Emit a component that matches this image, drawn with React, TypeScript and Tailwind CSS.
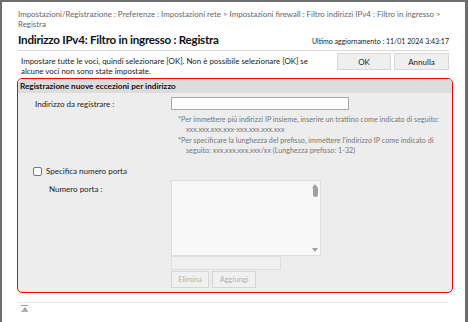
import React from 'react'

const font = { fontFamily: 'Lato, "Noto Sans", Arial, sans-serif' }

function ScrollList() {
  return (
    <div className="relative h-[76px] w-[150px] border border-[#dedede] bg-[#f8f8f8]">
      <div className="absolute right-[2px] top-[3px] flex h-[68px] w-[6px] flex-col items-center justify-between">
        <div className="h-0 w-0 border-x-[3px] border-b-[4px] border-x-transparent border-b-[#a0a0a0]" />
        <div className="-mt-[52px] h-[10px] w-[5px] rounded-full bg-[#a0a0a0]" />
        <div className="h-0 w-0 border-x-[3px] border-t-[4px] border-x-transparent border-t-[#a0a0a0]" />
      </div>
    </div>
  )
}

export default function App() {
  return (
    <div
      className="relative h-[322px] w-[468px] overflow-hidden border-l-2 border-r-[3px] border-t-2 border-[#6e6e6e] bg-white"
      style={font}
    >
      <div className="pl-4 pr-4 pt-[7px]">
        <div className="whitespace-nowrap text-[7.9px] leading-[10px] text-[#666]">
          Impostazioni/Registrazione : Preferenze : Impostazioni rete &gt; Impostazioni firewall : Filtro indirizzi IPv4 : Filtro in ingresso &gt;
          <br />
          Registra
        </div>

        <div className="mt-[1px] flex h-[21px] items-center justify-between border-b border-[#d6d6d6]">
          <h1 className="whitespace-nowrap text-[11.6px] font-bold leading-none tracking-[-0.25px] text-[#111]">
            Indirizzo IPv4: Filtro in ingresso : Registra
          </h1>
          <span className="whitespace-nowrap pt-[2px] text-[7px] text-[#222]">Ultimo aggiornamento : 11/01 2024 3:43:17</span>
        </div>

        <div className="mt-[2px] flex h-[22px] justify-between">
          <p className="whitespace-nowrap pl-[3px] pt-[3px] text-[7.9px] leading-[10px] text-[#222]">
            Impostare tutte le voci, quindi selezionare [OK]. Non è possibile selezionare [OK] se
            <br />
            alcune voci non sono state impostate.
          </p>
          <div className="flex gap-[3px]">
            <button className="h-[17px] w-[54px] border border-[#d8d8d8] bg-[#efefef] text-[8px] text-[#222]">OK</button>
            <button className="h-[17px] w-[55px] border border-[#d8d8d8] bg-[#efefef] text-[8px] text-[#222]">Annulla</button>
          </div>
        </div>

        <div className="-ml-[1px] mt-[3px] w-[436px] overflow-hidden rounded-[5px] border-[1.5px] border-[#f00000] bg-[#ededed]">
          <div className="h-[14px] whitespace-nowrap bg-[#dcdcdc] pl-[2px] text-[8.2px] font-bold leading-[14px] text-[#111]">
            Registrazione nuove eccezioni per indirizzo
          </div>

          <div className="pb-[4px] pl-[17px] pt-[4px]">
            <div className="flex">
              <span className="w-[136px] whitespace-nowrap pt-[1px] text-[8px] leading-[12px] text-[#222]">Indirizzo da registrare :</span>
              <div className="h-[13px] w-[178px] border border-[#aaa] bg-white" />
            </div>

            <div className="ml-[143px] mt-[5px] whitespace-nowrap text-[7.2px] leading-[10px] text-[#777]">
              <div>*Per immettere più indirizzi IP insieme, inserire un trattino come indicato di seguito:</div>
              <div className="pl-[8px]">xxx.xxx.xxx.xxx-xxx.xxx.xxx.xxx</div>
              <div className="mt-[1px]">*Per specificare la lunghezza del prefisso, immettere l'indirizzo IP come indicato di</div>
              <div className="pl-[8px]">seguito: xxx.xxx.xxx.xxx/xx (Lunghezza prefisso: 1-32)</div>
            </div>

            <label className="-ml-[2px] mt-[10px] flex items-center gap-[4px] whitespace-nowrap text-[8px] leading-[10px] text-[#222]">
              <span className="h-[9px] w-[9px] rounded-[2px] border border-[#777] bg-white" />
              Specifica numero porta
            </label>

            <div className="mt-[4px] flex">
              <span className="w-[136px] whitespace-nowrap pl-[14px] pt-[4px] text-[8px] leading-[10px] text-[#222]">Numero porta :</span>
              <div className="flex flex-col">
                <ScrollList />
                <div className="h-[14px] w-[110px] border border-[#dedede] bg-[#f0f0f0]" />
                <div className="mt-[1px] flex gap-[3px]">
                  <button className="h-[17px] w-[38px] border border-[#d6d6d6] bg-[#f0f0f0] text-[7.5px] text-[#b0b0b0]">Elimina</button>
                  <button className="h-[17px] w-[44px] border border-[#d6d6d6] bg-[#f0f0f0] text-[7.5px] text-[#b0b0b0]">Aggiungi</button>
                </div>
              </div>
            </div>
          </div>
        </div>

        <div className="mt-[9px] border-t border-[#e8e8e8]" />
        <div className="ml-[3px] mt-[2px] flex w-[7px] flex-col items-center">
          <div className="h-[1px] w-[7px] bg-[#9a9a9a]" />
          <div className="mt-[1px] h-0 w-0 border-x-[3.5px] border-b-[4px] border-x-transparent border-b-[#9a9a9a]" />
          <div className="h-[1px] w-[7px] bg-[#9a9a9a]" />
        </div>
      </div>

      <div className="pointer-events-none absolute inset-x-0 bottom-0 h-[14px] bg-gradient-to-b from-white/0 to-white" />
    </div>
  )
}
